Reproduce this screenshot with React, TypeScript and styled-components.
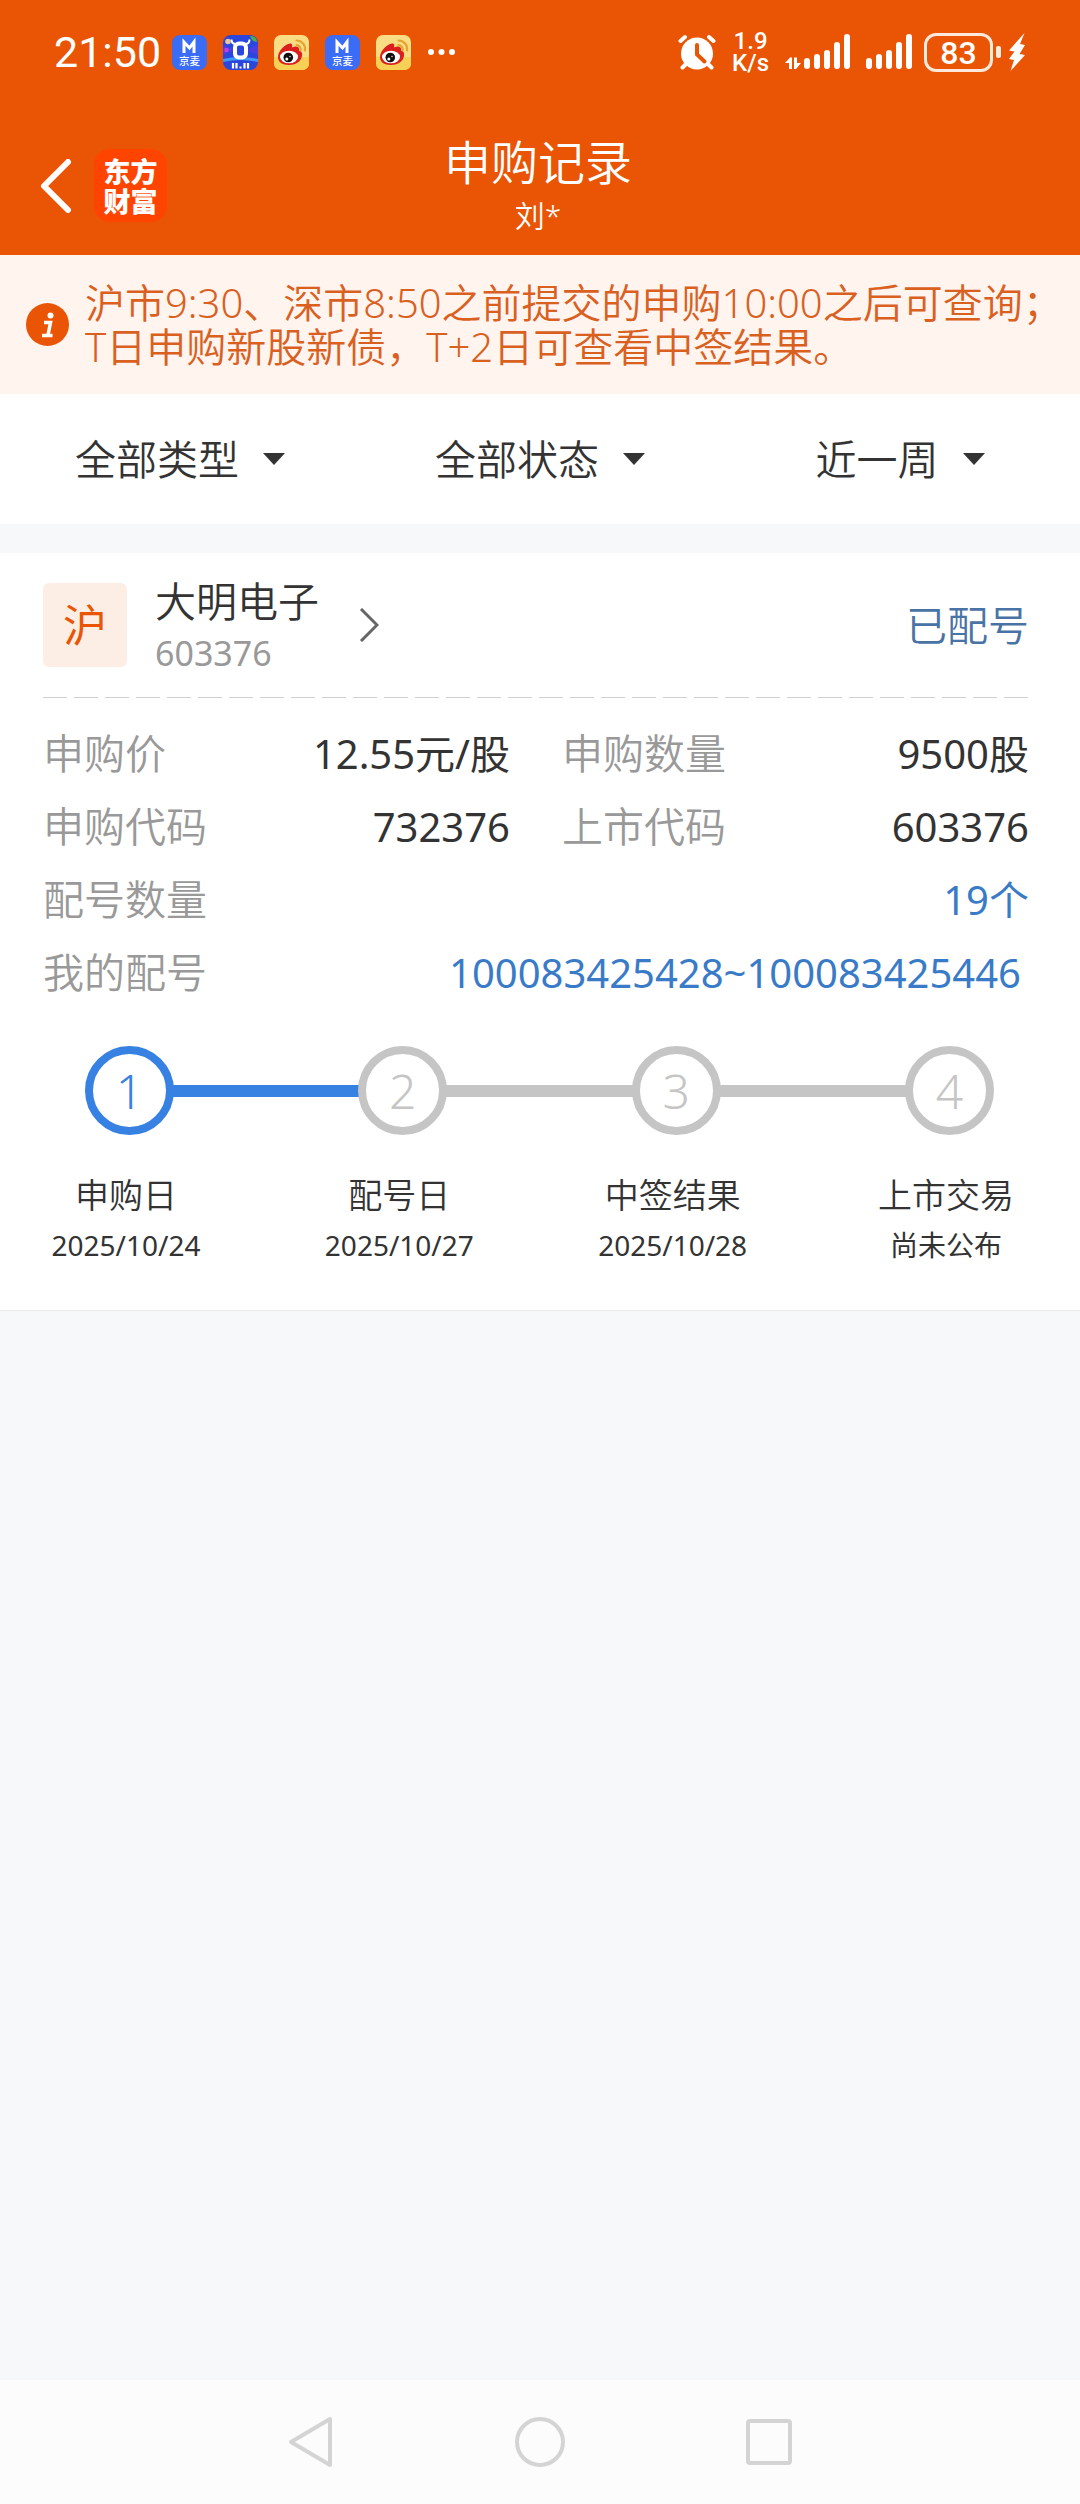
import React from 'react';
import styled, { createGlobalStyle } from 'styled-components';

const ORANGE = '#e95504';
const BLUE = '#3a7bc8';
const INK = '#333333';
const MUTED = '#999999';

const GlobalStyle = createGlobalStyle`
  * { box-sizing: border-box; }
  body {
    margin: 0;
    background: #f6f8fa;
    color: ${INK};
    font-family: 'Noto Sans', 'Noto Sans CJK SC', sans-serif;
    font-weight: 350;
  }
  h1, h2, p, ol, dl, dd { margin: 0; padding: 0; font-weight: inherit; }
  ol { list-style: none; }
  button { padding: 0; border: 0; background: none; font: inherit; color: inherit; cursor: pointer; }
  a { color: inherit; text-decoration: none; }
  svg { display: block; flex: none; }
`;

const Screen = styled.div`
  min-height: 100vh;
  display: flex;
  flex-direction: column;
`;

const StatusBar = styled.div`
  height: 104px;
  padding: 0 54px;
  display: flex;
  align-items: center;
  justify-content: space-between;
  background: ${ORANGE};
  color: #fff;
  font-family: Roboto, 'Noto Sans CJK SC', sans-serif;
  font-weight: 400;
`;

const StatusGroup = styled.div<{ $gap: number }>`
  display: flex;
  align-items: center;
  gap: ${(p) => p.$gap}px;
`;

const Clock = styled.time`
  font-size: 43px;
  line-height: 48px;
`;

const Speed = styled.div`
  font-size: 24px;
  line-height: 22px;
  font-weight: 500;
  text-align: center;
`;

const Battery = styled.div`
  display: flex;
  align-items: center;
  gap: 3px;
`;

const BatteryBody = styled.div`
  width: 69px;
  height: 39px;
  border: 3px solid #ffe9dc;
  border-radius: 12px;
  font-size: 32px;
  line-height: 34px;
  font-weight: 500;
  text-align: center;
`;

const BatteryTip = styled.div`
  width: 5px;
  height: 12px;
  border-radius: 2px;
  background: #ffe9dc;
`;

const Header = styled.header`
  height: 151px;
  padding: 0 44px 0 40px;
  display: grid;
  grid-template-columns: 1fr auto 1fr;
  align-items: center;
  background: ${ORANGE};
  color: #fff;
`;

const HeaderLeft = styled.div`
  padding-top: 12px;
  display: flex;
  align-items: center;
  gap: 22px;
`;

const Brand = styled.a`
  width: 73px;
  height: 73px;
  border-radius: 16px;
  display: grid;
  place-content: center;
  background: #ff4400;
  color: #fff;
  font-family: 'Noto Sans CJK SC', sans-serif;
  font-size: 27px;
  line-height: 30px;
  font-weight: 900;
`;

const HeaderTitle = styled.div`
  padding-top: 11px;
  text-align: center;
`;

const Title = styled.h1`
  font-size: 47px;
  line-height: 62px;
`;

const Account = styled.p`
  font-size: 30px;
  line-height: 46px;
`;

const Notice = styled.section`
  min-height: 139px;
  padding-left: 26px;
  display: flex;
  align-items: center;
  gap: 16px;
  background: #fff4ee;
  color: #d9601f;
  font-size: 40px;
  line-height: 44px;
  white-space: nowrap;
`;

const Filters = styled.form`
  height: 130px;
  display: grid;
  grid-template-columns: repeat(3, 1fr);
  background: #fff;
`;

const Filter = styled.label`
  display: flex;
  align-items: center;
  justify-content: center;
  gap: 24px;
`;

const FilterSelect = styled.select`
  appearance: none;
  field-sizing: content;
  padding: 0;
  border: 0;
  background: none;
  color: ${INK};
  font: inherit;
  font-size: 41px;
  line-height: 60px;
`;

const Card = styled.article`
  margin-top: 29px;
  padding: 0 51px 40px 43px;
  background: #fff;
  border-bottom: 1px solid #ebebeb;
`;

const CardHead = styled.div`
  height: 145px;
  padding-bottom: 2px;
  display: flex;
  align-items: center;
  background: repeating-linear-gradient(90deg, #cfcfcf 0 24px, transparent 24px 31px) left bottom / 100% 1px no-repeat;
`;

const Market = styled.span`
  width: 84px;
  height: 84px;
  border-radius: 6px;
  display: grid;
  place-content: center;
  background: #fceee5;
  color: ${ORANGE};
  font-size: 44px;
  line-height: 60px;
  font-weight: 400;
`;

const StockLink = styled.a`
  margin-left: 28px;
  display: flex;
  align-items: center;
  gap: 40px;
`;

const StockName = styled.h2`
  font-size: 41px;
  line-height: 56px;
`;

const StockCode = styled.p`
  font-size: 34px;
  line-height: 48px;
  font-weight: 400;
  color: ${MUTED};
`;

const State = styled.span`
  margin-left: auto;
  font-size: 41px;
  line-height: 56px;
  color: #4a73a5;
`;

const Facts = styled.dl`
  padding-top: 19px;
  display: grid;
  grid-template-columns: 1fr 1fr;
  column-gap: 52px;
`;

const Fact = styled.div<{ $wide?: boolean }>`
  grid-column: ${(p) => (p.$wide ? '1 / -1' : 'auto')};
  display: flex;
  justify-content: space-between;
  line-height: 73px;
`;

const FactName = styled.dt`
  font-size: 41px;
  color: ${MUTED};
`;

const FactValue = styled.dd<{ $blue?: boolean; $inset?: boolean }>`
  padding-right: ${(p) => (p.$inset ? 8 : 0)}px;
  font-size: 40px;
  font-weight: 400;
  color: ${(p) => (p.$blue ? BLUE : INK)};
`;

const Track = styled.div`
  padding: 37px 35px 0 42px;
  display: flex;
  align-items: center;
`;

const Dot = styled.span<{ $on?: boolean }>`
  width: 89px;
  height: 89px;
  border: 8px solid ${(p) => (p.$on ? '#3781e2' : '#c5c5c5')};
  border-radius: 50%;
  color: ${(p) => (p.$on ? '#3781e2' : '#c5c5c5')};
  font-size: 48px;
  line-height: 73px;
  text-align: center;
`;

const Bar = styled.span<{ $on?: boolean }>`
  flex: 1;
  height: 12px;
  margin: 0 -2px;
  background: ${(p) => (p.$on ? '#3781e2' : '#c5c5c5')};
`;

const Steps = styled.ol`
  padding-top: 35px;
  display: flex;
  justify-content: space-between;
`;

const Step = styled.li`
  width: 166px;
  text-align: center;
  white-space: nowrap;
`;

const StepName = styled.p`
  font-size: 34px;
  line-height: 50px;
`;

const StepDate = styled.p`
  font-size: 28px;
  line-height: 50px;
  font-weight: 400;
`;

const NavBar = styled.nav`
  height: 124px;
  margin-top: auto;
  display: flex;
  align-items: center;
  justify-content: center;
  gap: 169px;
  background: #fcfcfc;
`;

const NavButton = styled.button`
  width: 60px;
  height: 60px;
  display: grid;
  place-content: center;
`;

const JingmaiIcon = () => (
  <svg width="35" height="35" viewBox="0 0 35 35">
    <rect width="35" height="35" rx="8" fill="#3a6cf6" />
    <path d="M12 18V7l5.500 6L22 7v11" fill="none" stroke="#fff" strokeWidth="3" />
    <text x="17.500" y="30" fontSize="10.500" fontWeight="500" fill="#fff" textAnchor="middle">京麦</text>
  </svg>
);

const SaleIcon = () => (
  <svg width="35" height="35" viewBox="0 0 35 35">
    <rect width="35" height="35" rx="8" fill="#2b46dc" />
    <path d="M0 20L12 15 0 10zM35 20L23 15l12-5z" fill="#4a3fe0" />
    <path d="M0 24q17-4 35 0v3q-17-4-35 0z" fill="#3f9bf5" />
    <circle cx="5" cy="6.500" r="2.800" fill="#e8c59a" />
    <circle cx="3.500" cy="15" r="2.300" fill="#c13fe0" />
    <path d="M27 1q6-1 7 6-5 0-7-6z" fill="#46b04a" />
    <rect x="12" y="8.500" width="11" height="14" rx="4" fill="none" stroke="#fff" strokeWidth="4" />
    <path d="M8.500 4.500q0 4.500 4.500 4.500M26.500 4.500q0 4.500-4.500 4.500" fill="none" stroke="#fff" strokeWidth="2" />
    <path d="M10 28v5.500M13.500 28v5.500M21.500 28v5.500M25 28v5.500" stroke="#fff" strokeWidth="2.200" />
    <rect x="16.500" y="31.500" width="2" height="2" fill="#fff" />
  </svg>
);

const WeiboIcon = () => (
  <svg width="35" height="35" viewBox="0 0 35 35">
    <rect width="35" height="35" rx="7" fill="#f8dd84" />
    <path d="M0 22h35v6q0 7-7 7H7q-7 0-7-7z" fill="#f7d155" />
    <path d="M4 22c0-6 7-13 12-13.500 2.500 0 2.500 2 2 4 4-2 8-1 7 3 3 1 3.500 3 3 5.500C27 27 21 30 15 30 8 30 4 27 4 22z" fill="#da1f1c" />
    <ellipse cx="15" cy="22" rx="9" ry="6.300" fill="#fff" />
    <circle cx="14.300" cy="22.500" r="4.800" fill="#111" />
    <circle cx="12.800" cy="24" r="1.500" fill="#fff" />
    <circle cx="16" cy="21.500" r="0.700" fill="#fff" />
    <path d="M22.500 5.500a8.500 8.500 0 0 1 8.500 10M22.500 10a4.500 4.500 0 0 1 4.200 5" fill="none" stroke="#e5a62f" strokeWidth="2.200" strokeLinecap="round" />
  </svg>
);

const MoreIcon = () => (
  <svg width="30" height="8" viewBox="0 0 30 8" fill="#fff">
    <circle cx="4" cy="4" r="3" />
    <circle cx="14.500" cy="4" r="3" />
    <circle cx="25" cy="4" r="3" />
  </svg>
);

const AlarmIcon = () => (
  <svg width="38" height="36" viewBox="0 0 38 36" fill="none" strokeLinecap="round">
    <circle cx="19" cy="19.500" r="16" fill="#fff" />
    <path d="M2.500 7L7 3M35.500 7L31 3" stroke="#fff" strokeWidth="4" />
    <path d="M8 30l-3.500 3.500M30 30l3.500 3.500" stroke="#fff" strokeWidth="4" />
    <path d="M19 11v9.500l7.500 7" stroke={ORANGE} strokeWidth="4" />
  </svg>
);

const BARS = [
  [0, 11],
  [10, 15],
  [20, 19],
  [30, 27],
  [40, 35],
];

const SignalIcon = ({ traffic }: { traffic?: boolean }) => {
  const shift = traffic ? 19 : 0;
  return (
    <svg width={46 + shift} height="36" viewBox={`${-shift} 0 ${46 + shift} 36`} fill="#fff">
      {traffic && (
        <path d="M-19 29l5-5.500h2V35h-3v-6zM-10 23.500h3V29h4l-5 6h-2z" />
      )}
      {BARS.map(([x, h]) => (
        <rect key={x} x={x} y={35 - h} width="6" height={h} rx="3" />
      ))}
    </svg>
  );
};

const BoltIcon = () => (
  <svg width="18" height="40" viewBox="0 0 18 40" fill="#fff">
    <path d="M16.500 1L1 18.500l5.500 1L1 27l5 1L2.500 39 17 23l-5.500-1L17 13l-5-1z" />
  </svg>
);

const InfoIcon = () => (
  <svg width="43" height="43" viewBox="0 0 43 43">
    <circle cx="21.500" cy="21.500" r="21.500" fill={ORANGE} />
    <circle cx="24.500" cy="12.500" r="3" fill="#fff" />
    <path d="M18 19.500h6.500l-2.500 12.500M16 32.500h10.500" fill="none" stroke="#fff" strokeWidth="3.500" />
  </svg>
);

const filters = [
  { label: '类型', options: ['全部类型', '新股', '新债'] },
  { label: '状态', options: ['全部状态', '已配号', '已中签'] },
  { label: '时间', options: ['近一周', '近一月', '近三月'] },
];

const steps = [
  { name: '申购日', date: '2025/10/24' },
  { name: '配号日', date: '2025/10/27' },
  { name: '中签结果', date: '2025/10/28' },
  { name: '上市交易', date: '尚未公布' },
];

export default function App() {
  return (
    <Screen>
      <GlobalStyle />
      <StatusBar>
        <StatusGroup $gap={11}>
          <Clock>21:50</Clock>
          <StatusGroup $gap={16}>
            <JingmaiIcon />
            <SaleIcon />
            <WeiboIcon />
            <JingmaiIcon />
            <WeiboIcon />
            <MoreIcon />
          </StatusGroup>
        </StatusGroup>
        <StatusGroup $gap={16}>
          <AlarmIcon />
          <Speed>
            1.9
            <br />
            K/s
          </Speed>
          <SignalIcon traffic />
          <StatusGroup $gap={12}>
            <SignalIcon />
            <StatusGroup $gap={7}>
              <Battery>
                <BatteryBody>83</BatteryBody>
                <BatteryTip />
              </Battery>
              <BoltIcon />
            </StatusGroup>
          </StatusGroup>
        </StatusGroup>
      </StatusBar>

      <Header>
        <HeaderLeft>
          <button type="button" aria-label="返回">
            <svg width="32" height="54" viewBox="0 0 32 54" fill="none" stroke="#fff" strokeWidth="6" strokeLinecap="round" strokeLinejoin="round">
              <path d="M28 3L4 27l24 24" />
            </svg>
          </button>
          <Brand href="#home">
            东方
            <br />
            财富
          </Brand>
        </HeaderLeft>
        <HeaderTitle>
          <Title>申购记录</Title>
          <Account>刘*</Account>
        </HeaderTitle>
      </Header>

      <Notice>
        <InfoIcon />
        <p>
          沪市9:30、深市8:50之前提交的申购10:00之后可查询；
          <br />
          T日申购新股新债，T+2日可查看中签结果。
        </p>
      </Notice>

      <Filters>
        {filters.map((f) => (
          <Filter key={f.label}>
            <FilterSelect aria-label={f.label}>
              {f.options.map((o) => (
                <option key={o}>{o}</option>
              ))}
            </FilterSelect>
            <svg width="22" height="12" viewBox="0 0 22 12" fill={INK}>
              <path d="M0 0h22L11 12z" />
            </svg>
          </Filter>
        ))}
      </Filters>

      <Card>
        <CardHead>
          <Market>沪</Market>
          <StockLink href="#603376">
            <div>
              <StockName>大明电子</StockName>
              <StockCode>603376</StockCode>
            </div>
            <svg width="20" height="34" viewBox="0 0 20 34" fill="none" stroke="#666" strokeWidth="3">
              <path d="M2 1l16 16L2 33" />
            </svg>
          </StockLink>
          <State>已配号</State>
        </CardHead>

        <Facts>
          <Fact>
            <FactName>申购价</FactName>
            <FactValue>12.55元/股</FactValue>
          </Fact>
          <Fact>
            <FactName>申购数量</FactName>
            <FactValue>9500股</FactValue>
          </Fact>
          <Fact>
            <FactName>申购代码</FactName>
            <FactValue>732376</FactValue>
          </Fact>
          <Fact>
            <FactName>上市代码</FactName>
            <FactValue>603376</FactValue>
          </Fact>
          <Fact $wide>
            <FactName>配号数量</FactName>
            <FactValue $blue>19个</FactValue>
          </Fact>
          <Fact $wide>
            <FactName>我的配号</FactName>
            <FactValue $blue $inset>
              <a href="#numbers">100083425428~100083425446</a>
            </FactValue>
          </Fact>
        </Facts>

        <Track>
          {steps.map((s, i) => (
            <React.Fragment key={s.name}>
              {i > 0 && <Bar $on={i === 1} />}
              <Dot $on={i === 0}>{i + 1}</Dot>
            </React.Fragment>
          ))}
        </Track>
        <Steps>
          {steps.map((s) => (
            <Step key={s.name}>
              <StepName>{s.name}</StepName>
              <StepDate>{s.date}</StepDate>
            </Step>
          ))}
        </Steps>
      </Card>

      <NavBar>
        <NavButton type="button" aria-label="后退">
          <svg width="46" height="52" viewBox="0 0 46 52" fill="none" stroke="#d4d4d4" strokeWidth="4" strokeLinejoin="round">
            <path d="M42 3v46L3 26z" />
          </svg>
        </NavButton>
        <NavButton type="button" aria-label="主页">
          <svg width="52" height="52" viewBox="0 0 52 52" fill="none" stroke="#d4d4d4" strokeWidth="4">
            <circle cx="26" cy="26" r="23" />
          </svg>
        </NavButton>
        <NavButton type="button" aria-label="最近任务">
          <svg width="46" height="46" viewBox="0 0 46 46" fill="none" stroke="#d4d4d4" strokeWidth="4">
            <rect x="2" y="2" width="42" height="42" rx="2" />
          </svg>
        </NavButton>
      </NavBar>
    </Screen>
  );
}
